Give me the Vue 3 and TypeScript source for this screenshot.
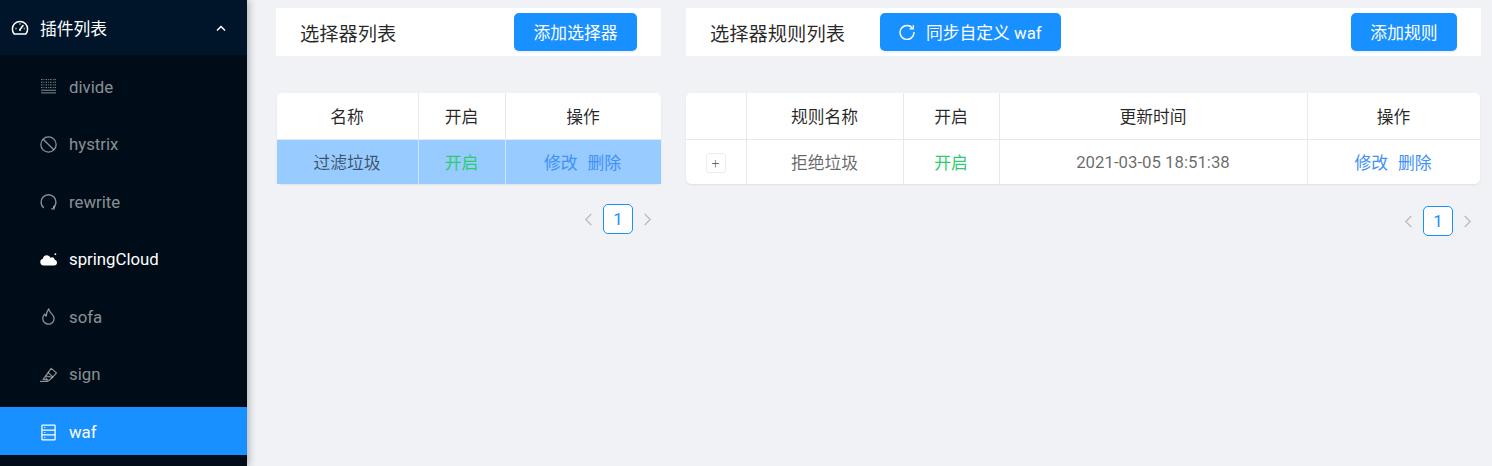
<script setup lang="ts">
interface NavItem { label: string; icon: string; state?: string }
const items: NavItem[] = [
  { label: 'divide', icon: 'divide' },
  { label: 'hystrix', icon: 'stop' },
  { label: 'rewrite', icon: 'rewrite' },
  { label: 'springCloud', icon: 'cloud', state: 'bright' },
  { label: 'sofa', icon: 'fire' },
  { label: 'sign', icon: 'sign' },
  { label: 'waf', icon: 'waf', state: 'active' },
]
</script>

<template>
  <div class="page">
    <aside class="sider">
      <div class="sub-title">
        <svg class="gauge" viewBox="0 0 18 18" fill="none" stroke="currentColor" stroke-width="1.5">
          <path d="M3.200 15a7.600 7.600 0 1 1 11.600 0z" stroke-linejoin="round" />
          <path d="M9 10.500l3-4" stroke-linecap="round" />
          <circle cx="9" cy="11" r="1" fill="currentColor" stroke="none" />
          <path d="M4.500 9.500h1M12.800 9.500h.8M9 4.600v1" />
        </svg>
        <span class="sub-label">插件列表</span>
        <svg class="chevron" viewBox="0 0 10 7" fill="none" stroke="currentColor" stroke-width="1.500">
          <path d="M1 5.500l4-4 4 4" />
        </svg>
      </div>
      <ul class="menu">
        <li v-for="item in items" :key="item.label" class="menu-item" :class="item.state">
          <svg class="icon" viewBox="0 0 16 16" fill="none" stroke="currentColor">
            <template v-if="item.icon === 'divide'">
              <path d="M1 1.500h14M1 4h14M1 6.500h14M1 9h14" stroke-dasharray="1 1.200" stroke-width=".8" />
              <path d="M2 1v9M6 1v9M10 1v9M14 1v9" stroke-dasharray="1 1.500" stroke-width=".6" />
              <path d="M1 11.500h14M1 14h14" stroke-width=".9" />
            </template>
            <template v-else-if="item.icon === 'stop'">
              <circle cx="8" cy="8" r="7.200" stroke-width="1.200" />
              <path d="M3 3l10 10" stroke-width="1.200" />
            </template>
            <template v-else-if="item.icon === 'rewrite'">
              <path d="M3.500 14A7 7 0 1 1 12.500 14" stroke-width="1.300" />
              <path d="M10.500 15h2.800v-2.800" stroke-width="1.200" />
            </template>
            <template v-else-if="item.icon === 'cloud'">
              <path d="M3.400 13.600a3.200 3.200 0 0 1-.7-6.300 3.800 3.800 0 0 1 3.700-3.300c1.500 0 2.900.9 3.400 2.300a3.200 3.200 0 0 1 4.200 1.900 2.700 2.700 0 0 1 2 2.600 2.800 2.800 0 0 1-2.800 2.800z" fill="currentColor" stroke="none" />
              <circle cx="14.500" cy="3" r=".8" fill="currentColor" stroke="none" />
            </template>
            <template v-else-if="item.icon === 'fire'">
              <path d="M8.200 .8c.3 2.400 1.600 3.300 2.900 4.700 1.200 1.300 2.200 2.700 2.200 4.300A5.400 5.400 0 0 1 8 15.200a5.400 5.400 0 0 1-5.400-5.400c0-1.800.9-3.200 2-4.300.1 1 .5 1.700 1.200 2.200C6 5 6.600 2.800 8.200 .8z" stroke-width="1.200" stroke-linejoin="round" />
            </template>
            <template v-else-if="item.icon === 'sign'">
              <path d="M10.500 2.200l5 4.300-3.700 4.300-6.400-1.500z" stroke-width="1.100" stroke-linejoin="round" />
              <path d="M5.400 9.300L3 12.600l5.600 1 3.200-2.800M7.500 6l4.600 4.200M5.500 11l1.500 2.300" stroke-width="1.100" />
              <path d="M0 14.500h8" stroke-width="1.100" />
            </template>
            <template v-else>
              <rect x="1.800" y="1" width="12.400" height="14" rx=".6" stroke-width="1.200" />
              <path d="M1.800 5.700h12.400M1.800 10.300h12.400" stroke-width="1.200" />
              <path d="M4 3.300h1M4 8h1M4 12.700h1" stroke-width="1" />
            </template>
          </svg>
          <span>{{ item.label }}</span>
        </li>
      </ul>
    </aside>

    <main class="content">
      <section class="pane left">
        <header class="bar">
          <h3 class="bar-title">选择器列表</h3>
          <button class="btn">添加选择器</button>
        </header>
        <table class="tbl">
          <colgroup><col style="width:142px" /><col style="width:87px" /><col /></colgroup>
          <thead><tr><th>名称</th><th>开启</th><th>操作</th></tr></thead>
          <tbody>
            <tr class="selected">
              <td>过滤垃圾</td>
              <td class="on">开启</td>
              <td class="ops"><a>修改</a><a>删除</a></td>
            </tr>
          </tbody>
        </table>
        <nav class="pager">
          <svg class="arrow" viewBox="0 0 8 12" fill="none" stroke="currentColor" stroke-width="1.300"><path d="M7 1L2 6l5 5" /></svg>
          <span class="page-no">1</span>
          <svg class="arrow" viewBox="0 0 8 12" fill="none" stroke="currentColor" stroke-width="1.300"><path d="M1 1l5 5-5 5" /></svg>
        </nav>
      </section>

      <section class="pane right">
        <header class="bar">
          <h3 class="bar-title">选择器规则列表</h3>
          <button class="btn sync">
            <svg class="sync-icon" viewBox="0 0 16 16" fill="none" stroke="currentColor" stroke-width="1.400">
              <path d="M13.800 4.500A7 7 0 1 0 15 8" />
              <path d="M14.300 1v3.800h-3.700" stroke-width="1.200" />
            </svg>
            同步自定义 waf
          </button>
          <button class="btn push">添加规则</button>
        </header>
        <table class="tbl">
          <colgroup>
            <col style="width:61px" /><col style="width:157px" /><col style="width:96px" /><col style="width:308px" /><col />
          </colgroup>
          <thead><tr><th></th><th>规则名称</th><th>开启</th><th>更新时间</th><th>操作</th></tr></thead>
          <tbody>
            <tr>
              <td><span class="expand">+</span></td>
              <td>拒绝垃圾</td>
              <td class="on">开启</td>
              <td>2021-03-05 18:51:38</td>
              <td class="ops"><a>修改</a><a>删除</a></td>
            </tr>
          </tbody>
        </table>
        <nav class="pager low">
          <svg class="arrow" viewBox="0 0 8 12" fill="none" stroke="currentColor" stroke-width="1.300"><path d="M7 1L2 6l5 5" /></svg>
          <span class="page-no">1</span>
          <svg class="arrow" viewBox="0 0 8 12" fill="none" stroke="currentColor" stroke-width="1.300"><path d="M1 1l5 5-5 5" /></svg>
        </nav>
      </section>
    </main>
  </div>
</template>

<style>
html, body { margin: 0; background: #f0f2f5; overflow: hidden; }
</style>

<style scoped>
.page {
  display: flex;
  width: 1492px;
  height: 466px;
  overflow: hidden;
  background: #f0f2f5;
  font-family: Roboto, "Noto Sans CJK SC", sans-serif;
  font-size: 16.8px;
  color: rgba(0, 0, 0, .6);
}
.sider {
  flex: 0 0 247px;
  background: #000c17;
  box-shadow: 2px 0 7px rgba(29, 35, 41, .3);
  position: relative;
  z-index: 1;
}
.sub-title {
  height: 55px;
  display: flex;
  align-items: center;
  padding: 1px 21px 0 11px;
  box-sizing: border-box;
  background: #001529;
  color: #fff;
}
.gauge { width: 18px; height: 18px; margin-right: 11px; }
.sub-label { flex: 1; }
.chevron { width: 10px; height: 7px; }
.menu { list-style: none; margin: 0; padding: 6px 0 0; }
.menu-item {
  height: 48px;
  margin-bottom: 9.600px;
  display: flex;
  align-items: center;
  box-sizing: border-box;
  padding: 3px 0 0 40px;
  color: rgba(255, 255, 255, .55);
}
.menu-item.bright { color: #fff; }
.menu-item.active { background: #1890ff; color: #fff; }
.icon { width: 17px; height: 17px; margin-right: 12px; }
.content {
  flex: 1;
  display: flex;
  padding: 8px 11px 0 29px;
  gap: 25px;
  min-width: 0;
}
.pane { display: flex; flex-direction: column; }
.left { width: 385px; }
.right { flex: 1; min-width: 0; }
.bar {
  height: 48px;
  flex: none;
  background: #fff;
  display: flex;
  align-items: center;
  padding: 0 24px;
  margin-bottom: 37px;
  box-sizing: border-box;
}
.bar-title {
  margin: 0;
  padding-top: 5px;
  font-size: 19.300px;
  font-weight: 400;
  color: rgba(0, 0, 0, .85);
  flex: 1;
  line-height: 1;
}
.right .bar-title { flex: 0 0 auto; margin-right: 35px; }
.btn {
  height: 38px;
  border: 0;
  border-radius: 5px;
  padding: 0 19.500px;
  background: #1890ff;
  color: #fff;
  font: inherit;
  box-shadow: 0 2px 0 rgba(0, 0, 0, .05);
  white-space: nowrap;
  display: inline-flex;
  align-items: center;
}
.sync { padding: 0 19px; }
.sync-icon { width: 16px; height: 16px; margin-right: 11px; }
.push { margin-left: auto; }
.tbl {
  width: calc(100% - 1px);
  table-layout: fixed;
  border-collapse: separate;
  border-spacing: 0;
  background: #fff;
  border-radius: 5px;
  box-shadow: 0 1px 2px rgba(0, 0, 0, .08);
  box-sizing: border-box;
  text-align: center;
}
.left .tbl { width: 384px; margin-left: 1px; }
th, td { padding: 0 1px 0 0; border-right: 1px solid #e8e8e8; font-weight: 400; }
th:last-child, td:last-child { border-right: 0; }
th { height: 46px; border-bottom: 1px solid #e8e8e8; color: rgba(0, 0, 0, .85); }
td { height: 44px; }
.selected td { background: #98cbff; border-right-color: #d0e6ff; }
.on { color: #2ecc71; }
td.ops { padding-right: 2px; }
.ops a { color: #4090f7; margin: 0 5px; }
.expand {
  display: inline-flex;
  width: 20px;
  height: 20px;
  align-items: center;
  justify-content: center;
  box-sizing: border-box;
  border: 1px solid #ececec;
  border-radius: 3px;
  font-size: 14px;
  font-weight: 300;
  line-height: 1;
  vertical-align: middle;
}
.pager {
  display: flex;
  justify-content: flex-end;
  align-items: center;
  margin-top: 20px;
  padding-right: 8px;
  gap: 10px;
  color: #bdbdbd;
}
.pager.low { margin-top: 22px; }
.arrow { width: 10px; height: 13px; }
.page-no {
  width: 30px;
  height: 30px;
  box-sizing: border-box;
  display: flex;
  align-items: center;
  justify-content: center;
  background: #fff;
  border: 1px solid #1890ff;
  border-radius: 5px;
  color: #1890ff;
}
</style>
